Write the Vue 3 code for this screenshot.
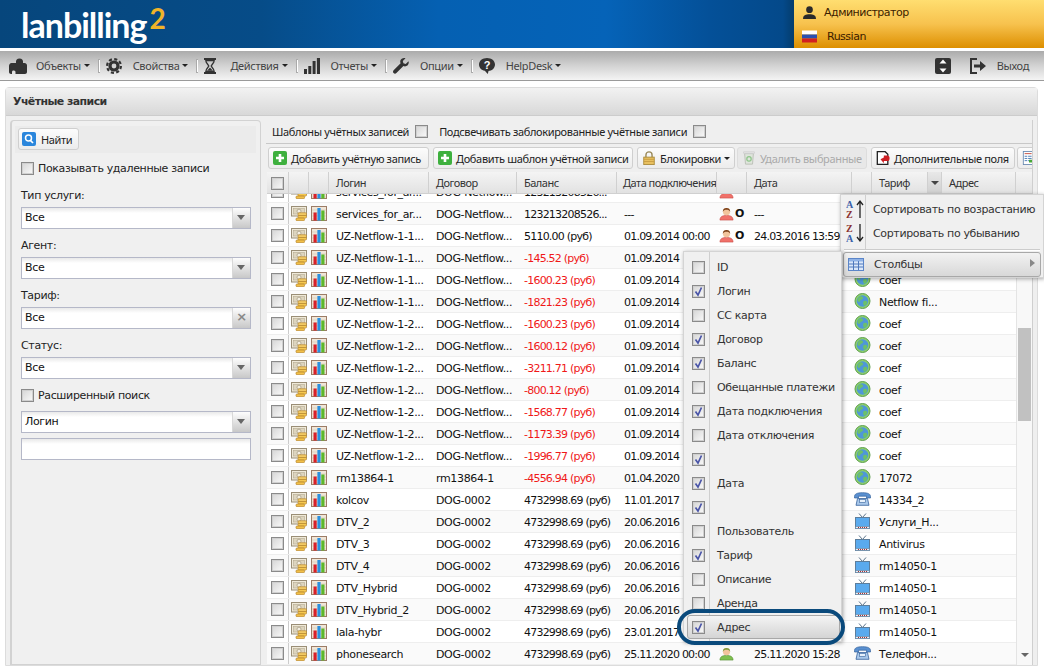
<script setup>
const U = 'UZ-Netflow-1-1...', V = 'UZ-Netflow-1-2...', D = 'DOG-Netflow...', G = 'DOG-0002'
const rows = [
  { l: 'services_for_ar...', c: D, b: '123213208526...', d1: '---', u: 'red', d2: '', t: '', a: '' },
  { l: 'services_for_ar...', c: D, b: '123213208526...', d1: '---', u: 'red', o: 1, d2: '---', t: '', a: '' },
  { l: U, c: D, b: '5110.00 (руб)', d1: '01.09.2014 00:00', u: 'red', o: 1, d2: '24.03.2016 13:59', t: '', a: '' },
  { l: U, c: D, b: '-145.52 (руб)', neg: 1, d1: '01.09.2014', u: 'red', d2: '', t: '', a: '' },
  { l: U, c: D, b: '-1600.23 (руб)', neg: 1, d1: '01.09.2014', t: 'globe', a: 'coef' },
  { l: U, c: D, b: '-1821.23 (руб)', neg: 1, d1: '01.09.2014', t: 'globe', a: 'Netflow fi...' },
  { l: V, c: D, b: '-1600.23 (руб)', neg: 1, d1: '01.09.2014', t: 'globe', a: 'coef' },
  { l: V, c: D, b: '-1600.12 (руб)', neg: 1, d1: '01.09.2014', t: 'globe', a: 'coef' },
  { l: V, c: D, b: '-3211.71 (руб)', neg: 1, d1: '01.09.2014', t: 'globe', a: 'coef' },
  { l: V, c: D, b: '-800.12 (руб)', neg: 1, d1: '01.09.2014', t: 'globe', a: 'coef' },
  { l: V, c: D, b: '-1568.77 (руб)', neg: 1, d1: '01.09.2014', t: 'globe', a: 'coef' },
  { l: V, c: D, b: '-1173.39 (руб)', neg: 1, d1: '01.09.2014', t: 'globe', a: 'coef' },
  { l: V, c: D, b: '-1996.77 (руб)', neg: 1, d1: '01.09.2014', t: 'globe', a: 'coef' },
  { l: 'rm13864-1', c: 'rm13864-1', b: '-4556.94 (руб)', neg: 1, d1: '01.04.2020', t: 'globe', a: '17072' },
  { l: 'kolcov', c: G, b: '4732998.69 (руб)', d1: '11.01.2017', t: 'phone', a: '14334_2' },
  { l: 'DTV_2', c: G, b: '4732998.69 (руб)', d1: '20.06.2016', t: 'tv', a: 'Услуги_Н...' },
  { l: 'DTV_3', c: G, b: '4732998.69 (руб)', d1: '20.06.2016', t: 'tv', a: 'Antivirus' },
  { l: 'DTV_4', c: G, b: '4732998.69 (руб)', d1: '20.06.2016', t: 'tv', a: 'rm14050-1' },
  { l: 'DTV_Hybrid', c: G, b: '4732998.69 (руб)', d1: '20.06.2016', t: 'tv', a: 'rm14050-1' },
  { l: 'DTV_Hybrid_2', c: G, b: '4732998.69 (руб)', d1: '20.06.2016', t: 'tv', a: 'rm14050-1' },
  { l: 'lala-hybr', c: G, b: '4732998.69 (руб)', d1: '23.01.2017', t: 'tv', a: 'rm14050-1' },
  { l: 'phonesearch', c: G, b: '4732998.69 (руб)', d1: '25.11.2020 00:00', u: 'green', d2: '25.11.2020 15:28', t: 'phone', a: 'Телефон...' },
]
const columns = [
  { n: 'ID' }, { n: 'Логин', on: 1 }, { n: 'CC карта' }, { n: 'Договор', on: 1 }, { n: 'Баланс', on: 1 },
  { n: 'Обещанные платежи' }, { n: 'Дата подключения', on: 1 }, { n: 'Дата отключения' }, { n: '', on: 1 },
  { n: 'Дата', on: 1 }, { n: '', on: 1 }, { n: 'Пользователь' }, { n: 'Тариф', on: 1 }, { n: 'Описание' },
  { n: 'Аренда' }, { n: 'Адрес', on: 1, hot: 1 },
]
const filters = [
  { label: 'Тип услуги:', v: 'Все' }, { label: 'Агент:', v: 'Все' },
  { label: 'Тариф:', v: 'Все', clear: 1 }, { label: 'Статус:', v: 'Все' },
]
const nav = [
  { i: 'puzzle', t: 'Объекты' }, { i: 'gear', t: 'Свойства' }, { i: 'glass', t: 'Действия' },
  { i: 'bars', t: 'Отчеты' }, { i: 'wrench', t: 'Опции' }, { i: 'help', t: 'HelpDesk' },
]
</script>

<template>
  <div class="page">
    <svg class="defs" aria-hidden="true">
      <defs>
        <symbol id="money" viewBox="0 0 16 15">
          <rect x="0.5" y="0.5" width="15" height="9.500" fill="#efe9d8" stroke="#9a8e76" />
          <rect x="2.5" y="2.5" width="11" height="5.500" fill="#ddd5bf" stroke="#b5aa90" stroke-width=".6" />
          <circle cx="8" cy="5.2" r="2" fill="#f4efe2" stroke="#968a72" stroke-width=".6" />
          <rect x="7" y="6.800" width="8.500" height="2.700" rx="1" fill="#f7d06a" stroke="#b5842e" stroke-width=".7" />
          <rect x="7" y="9.400" width="8.500" height="2.700" rx="1" fill="#f5c850" stroke="#b5842e" stroke-width=".7" />
          <rect x="5" y="12" width="8.500" height="2.700" rx="1" fill="#f2c048" stroke="#b5842e" stroke-width=".7" />
        </symbol>
        <symbol id="chart" viewBox="0 0 16 15">
          <rect x="0.5" y="0.5" width="15" height="14" fill="#f0e6d8" stroke="#9c7c66" />
          <path d="M1 4h14M1 7h14M1 10h14M1 13h14" stroke="#d8c8b8" stroke-width=".7" />
          <rect x="2.500" y="6.500" width="3.200" height="8" fill="#d8202a" />
          <rect x="6.400" y="2" width="3.200" height="12.500" fill="#2a8fe0" />
          <rect x="10.300" y="4.500" width="3.200" height="10" fill="#5cb82c" />
        </symbol>
        <symbol id="user-red" viewBox="0 0 16 14">
          <path d="M1 13.5c0-3.5 2.500-5 7-5s7 1.500 7 5z" fill="#f0716a" stroke="#c84a44" stroke-width=".6" />
          <circle cx="8" cy="4.5" r="3.800" fill="#f2c49c" />
          <path d="M4 4.500C4 1.500 6 .5 8 .5s4 1 4 4c-1-1.500-2-2-4-2s-3 .5-4 2z" fill="#7a3f18" />
        </symbol>
        <symbol id="user-green" viewBox="0 0 16 14">
          <path d="M1 13.500c0-3.500 2.500-5 7-5s7 1.500 7 5z" fill="#7fc04e" stroke="#4f8a2c" stroke-width=".6" />
          <circle cx="8" cy="4.500" r="3.800" fill="#f2c49c" />
          <path d="M4 4.500C4 1.500 6 .5 8 .5s4 1 4 4c-1-1.500-2-2-4-2s-3 .5-4 2z" fill="#7d9a3a" />
        </symbol>
        <symbol id="globe" viewBox="0 0 16 16">
          <circle cx="8" cy="8" r="7.500" fill="#8ed06a" />
          <circle cx="8" cy="8" r="5.800" fill="#4f97d8" />
          <path d="M5 3.500c2-.8 3.500 0 3.500 1.500S6 6.500 5.500 8 3.500 9 3 7.500 3.500 4.500 5 3.500zM9.500 8c1.500-.8 3.500 0 3.300 1.500s-2 3.500-3 3.200S8 9 9.500 8z" fill="#6cc06a" />
          <circle cx="8" cy="8" r="7.500" fill="none" stroke="#5f9f50" />
        </symbol>
        <symbol id="phone" viewBox="0 0 17 14">
          <path d="M.5 4.500C.5 2 3 .7 8.500.7s8 1.300 8 3.800V6h-4V4.200H4.500V6h-4z" fill="#5a90d0" stroke="#33619c" stroke-width=".7" />
          <path d="M3.500 6.500h10L15 13.300H2z" fill="#a9c8ea" stroke="#33619c" stroke-width=".8" />
          <rect x="5.500" y="7.500" width="6" height="3" fill="#e6f0fb" stroke="#33619c" stroke-width=".6" />
        </symbol>
        <symbol id="tv" viewBox="0 0 15 16">
          <path d="M4 .5L7.500 4.500 11 .5" fill="none" stroke="#5a7288" />
          <rect x="0.500" y="4.500" width="14" height="11" fill="#5aaaee" stroke="#5d7e9c" />
          <rect x="0.500" y="13.500" width="14" height="2" fill="#e8eef4" stroke="#5d7e9c" stroke-width=".6" />
          <path d="M3 14.500h9" stroke="#b03030" stroke-dasharray="1 1" />
        </symbol>
        <symbol id="puzzle" viewBox="0 0 18 16">
          <path d="M0 8c0-1.500 1-3 2.500-3H7V3.500C7 2 8 .5 10.500.5S14 2 14 3.500V5h1.500C17 5 18 6 18 7.500V14c0 1-1 2-2 2H6.500v-2c0-1-1-1.500-2-1.500s-1.500.7-1.500 1.500v2H2c-1 0-2-1-2-2z" fill="#333" />
        </symbol>
        <symbol id="gear" viewBox="0 0 16 16">
          <circle cx="8" cy="8" r="4" fill="none" stroke="#333" stroke-width="3.200" />
          <circle cx="8" cy="8" r="6.900" fill="none" stroke="#333" stroke-width="2.200" stroke-dasharray="3.100 2.320" />
        </symbol>
        <symbol id="glass" viewBox="0 0 12 16">
          <path d="M0 0h12v2H0zM0 14h12v2H0z" fill="#333" />
          <path d="M1.800 2.500h8.400c0 2.500-2.500 4-3 5.500.5 1.500 3 3 3 5.500H1.800c0-2.500 2.500-4 3-5.500-.5-1.500-3-3-3-5.500z" fill="none" stroke="#333" stroke-width="1.300" />
          <path d="M3 12.800h6L6 9.500z" fill="#333" />
        </symbol>
        <symbol id="bars" viewBox="0 0 16 16">
          <path d="M0 11h3v5H0zM4.300 8h3v8h-3zM8.600 3h3v13h-3zM12.900 0H16v16h-3.100z" fill="#333" />
        </symbol>
        <symbol id="wrench" viewBox="0 0 16 16">
          <path d="M15.500 3.300l-2.800 2.600-2.300-.6-.6-2.300L12.500.3C10.500-.4 8 .5 7.400 2.500c-.3 1-.2 2 .2 2.800L.6 12.300c-.8.8-.8 2 0 2.800s2 .8 2.800 0l7-7c2.500 1 5-.5 5.300-3 .1-.6 0-1.200-.2-1.800z" fill="#333" />
        </symbol>
        <symbol id="help" viewBox="0 0 16 16">
          <path d="M8 0c4.500 0 8 2.800 8 6.500S12.500 13 9.500 13l-.7 3-3-3.300C2.500 12.200 0 9.800 0 6.500 0 2.800 3.500 0 8 0z" fill="#333" />
          <text x="8" y="11" text-anchor="middle" font-family="Liberation Sans, sans-serif" font-weight="700" font-size="11" fill="#fff">?</text>
        </symbol>
        <symbol id="check" viewBox="0 0 13 13">
          <path d="M3.500 6.500L6 10l3.500-7.500" fill="none" stroke="#4a55a8" stroke-width="1.700" />
        </symbol>
      </defs>
    </svg>

    <header class="top">
      <div class="logo"><span>lanbilling</span><sup>2</sup></div>
      <div class="account">
        <div class="acct-row">
          <svg class="acct-icon" viewBox="0 0 16 14"><circle cx="8" cy="4" r="3.600" fill="#2a2a2a" /><path d="M1 14c0-4 3-5 7-5s7 1 7 5z" fill="#2a2a2a" /></svg>
          <span>Администратор</span>
        </div>
        <div class="acct-row lang">
          <svg class="acct-icon" viewBox="0 0 15 12"><rect width="15" height="4" fill="#fff" /><rect y="4" width="15" height="4" fill="#2a50b0" /><rect y="8" width="15" height="4" fill="#d22020" /></svg>
          <span>Russian</span>
        </div>
      </div>
    </header>

    <nav class="navbar">
      <template v-for="(n, i) in nav" :key="n.t">
        <span v-if="i" class="nav-sep"></span>
        <div class="nav-item">
          <svg class="nav-icon" :class="n.i"><use :href="'#' + n.i" /></svg>
          <span>{{ n.t }}</span>
          <i class="caret"></i>
        </div>
      </template>
      <div class="nav-right">
        <svg class="nav-icon fs" viewBox="0 0 16 16"><rect width="16" height="16" rx="2" fill="#333" /><path d="M8 1.500l3.500 4h-7zM8 14.500l-3.500-4h7z" fill="#fff" /></svg>
        <svg class="nav-icon ex" viewBox="0 0 16 16"><path d="M7 1H1v14h6" fill="none" stroke="#333" stroke-width="2" /><path d="M4 6.500h6V3l6 5-6 5V9.500H4z" fill="#333" /></svg>
        <span>Выход</span>
      </div>
    </nav>

    <section class="panel">
      <h1 class="panel-title">Учётные записи</h1>
      <div class="panel-body">
        <aside class="filter">
          <div class="filter-bar">
            <button class="btn find">
              <svg class="find-i" viewBox="0 0 14 14"><rect width="14" height="14" rx="2" fill="#2a86dc" /><circle cx="6.500" cy="6" r="3" fill="none" stroke="#fff" stroke-width="1.500" /><path d="M8.500 8.500l2.500 2.500" stroke="#fff" stroke-width="1.700" /></svg>
              Найти
            </button>
          </div>
          <label class="chk first"><span class="cb"></span>Показывать удаленные записи</label>
          <div v-for="f in filters" :key="f.label" class="field">
            <div class="f-label">{{ f.label }}</div>
            <div class="combo">
              <span class="combo-v">{{ f.v }}</span>
              <span class="trig" :class="{ x: f.clear }">{{ f.clear ? '×' : '' }}</span>
            </div>
          </div>
          <label class="chk adv"><span class="cb"></span>Расширенный поиск</label>
          <div class="combo"><span class="combo-v login">Логин</span><span class="trig"></span></div>
          <div class="combo plain"></div>
        </aside>

        <main class="right">
          <div class="bar1">
            <span>Шаблоны учётных записей</span><span class="cb m1"></span>
            <span class="hl">Подсвечивать заблокированные учётные записи</span><span class="cb m1"></span>
          </div>
          <div class="bar2">
            <button class="btn w1"><svg class="bi" viewBox="0 0 14 14"><rect width="14" height="14" rx="2" fill="#3eb03e" /><path d="M7 3v8M3 7h8" stroke="#fff" stroke-width="2.600" /></svg>Добавить учётную запись</button>
            <button class="btn w2"><svg class="bi" viewBox="0 0 14 14"><rect width="14" height="14" rx="2" fill="#3eb03e" /><path d="M7 3v8M3 7h8" stroke="#fff" stroke-width="2.600" /></svg>Добавить шаблон учётной записи</button>
            <button class="btn w3"><svg class="bi" viewBox="0 0 14 16"><path d="M3.500 8V4.500a3.500 3.500 0 017 0V8" fill="none" stroke="#9a8a5a" stroke-width="1.600" /><rect x="1" y="7" width="12" height="8.500" fill="#e8c060" stroke="#a98838" /><path d="M1 9.500h12M1 12h12" stroke="#c89c40" /></svg>Блокировки<i class="caret"></i></button>
            <button class="btn w4 off"><svg class="bi" viewBox="0 0 14 16"><path d="M2 3h10l-1 12H3z" fill="#dfe5dc" stroke="#b8bdb4" /><rect x="1" y="1" width="12" height="2" fill="#e4e4e4" stroke="#c4c4c4" stroke-width=".6" /><circle cx="7" cy="9" r="2.500" fill="none" stroke="#8ec58a" stroke-width="1.400" /></svg>Удалить выбранные</button>
            <button class="btn w5"><svg class="bi" viewBox="0 0 16 16"><path d="M1.500.8h9l3 3v11.500h-12z" fill="#fff" stroke="#222" stroke-width="1.500" /><path d="M7 5h4.500a3 3 0 010 6.500H7V14L2.500 9.500 7 7.500z" fill="#cc1f24" transform="translate(3 0) scale(.85 1)" /></svg>Дополнительные поля</button>
            <button class="btn w6"><svg class="bi" viewBox="0 0 14 16"><rect x=".5" y=".5" width="11" height="15" fill="#fff" stroke="#6a8ab0" /><path d="M2 3h8" stroke="#c04030" /><path d="M2 6h3M6 6h4M2 8.500h3M6 8.500h4M2 11h3M6 11h4" stroke="#3a70b0" /><path d="M7 10h4V7.500l3 4-3 4V13H7z" fill="#48a838" /></svg></button>
          </div>

          <div class="grid-wrap">
            <div class="grid-head cols">
              <div class="hc ctr"><span class="cb"></span></div>
              <div class="hc"></div>
              <div class="hc"></div>
              <div class="hc">Логин</div>
              <div class="hc">Договор</div>
              <div class="hc">Баланс</div>
              <div class="hc clip">Дата подключения</div>
              <div class="hc"></div>
              <div class="hc">Дата</div>
              <div class="hc"></div>
              <div class="hc tar"><span>Тариф</span><span class="h-trig"><i class="caret"></i></span></div>
              <div class="hc">Адрес</div>
            </div>
            <div class="grid-scroll">
              <div class="rows">
                <div v-for="(r, i) in rows" :key="i" class="row cols" :class="{ odd: i % 2 === 1 }">
                  <div class="c ctr"><span class="cb"></span></div>
                  <div class="c ic"><svg class="s-money"><use href="#money" /></svg></div>
                  <div class="c ic"><svg class="s-chart"><use href="#chart" /></svg></div>
                  <div class="c t">{{ r.l }}</div>
                  <div class="c t">{{ r.c }}</div>
                  <div class="c t num" :class="{ neg: r.neg }">{{ r.b }}</div>
                  <div class="c t num">{{ r.d1 }}</div>
                  <div class="c uc">
                    <svg v-if="r.u" class="s-user"><use :href="'#user-' + r.u" /></svg>
                    <b v-if="r.o">O</b>
                  </div>
                  <div class="c t num">{{ r.d2 }}</div>
                  <div class="c ic type"><svg v-if="r.t" class="s-type"><use :href="'#' + r.t" /></svg></div>
                  <div class="c t">{{ r.a }}</div>
                  <div class="c t"></div>
                </div>
              </div>
              <div class="scrollbar">
                <span class="arr up"></span>
                <span class="thumb"></span>
                <span class="arr down"></span>
              </div>
            </div>
          </div>
        </main>
      </div>
    </section>

    <div class="menu sort">
      <div class="m-item">
        <span class="m-ic"><svg class="az" viewBox="0 0 18 20"><text x="0" y="9" class="ta">A</text><text x="0" y="19" class="tz">Z</text><path d="M14 19V3M11 6l3-4 3 4" fill="none" stroke="#222" stroke-width="1.300" /></svg></span>
        <span>Сортировать по возрастанию</span>
      </div>
      <div class="m-item">
        <span class="m-ic"><svg class="az" viewBox="0 0 18 20"><text x="0" y="9" class="tz">Z</text><text x="0" y="19" class="ta">A</text><path d="M14 1v16M11 14l3 4 3-4" fill="none" stroke="#222" stroke-width="1.300" /></svg></span>
        <span>Сортировать по убыванию</span>
      </div>
      <div class="m-div"></div>
      <div class="m-item hot">
        <span class="m-ic"><svg class="colsi" viewBox="0 0 16 13"><rect x=".5" y=".5" width="15" height="12" fill="#dbe8fa" stroke="#5b85c8" /><rect x="1" y="1" width="14" height="2.500" fill="#8fb2e6" /><path d="M5.500 3v9M10.500 3v9M1 6h14M1 9h14" stroke="#4f78bc" /></svg></span>
        <span>Столбцы</span>
        <i class="sub"></i>
      </div>
    </div>

    <div class="menu colmenu">
      <div v-for="(c, i) in columns" :key="i" class="cm-item" :class="{ hot: c.hot }">
        <span class="cm-ic"><span class="cb"><svg v-if="c.on" class="ck"><use href="#check" /></svg></span></span>
        <span>{{ c.n }}</span>
      </div>
    </div>
    <div class="ring"></div>
  </div>
</template>

<style>
html, body { margin: 0; background: #fff; overflow: hidden; }
</style>

<style scoped>
.page {
  position: relative;
  width: 1044px;
  height: 666px;
  overflow: hidden;
  display: flex;
  flex-direction: column;
  background: #fff;
  font-family: "DejaVu Sans", sans-serif;
  font-size: 11px;
  letter-spacing: -.35px;
  color: #222;
}
.defs { position: absolute; width: 0; height: 0; }
button { font: inherit; color: inherit; }

/* narrower text, as in the toolbars and the grid head */
.navbar, .bar1, .btn, .grid-head {
  font-family: "Noto Sans", sans-serif;
  font-size: 11px;
  letter-spacing: -.34px;
}
.grid-head { letter-spacing: -.5px; }

/* header */
.top {
  height: 48px;
  flex: none;
  display: flex;
  justify-content: space-between;
  background: linear-gradient(90deg, #06467c 0%, #064c88 25%, #0560b2 42%, #0563b8 58%, #045098 68%, #04498a 75%, #043d6e 76%);
}
.logo {
  padding: 0 0 0 21px;
  color: #fff;
  font-family: Lato, sans-serif;
  font-weight: 700;
  font-size: 34px;
  line-height: 50px;
  letter-spacing: -1px;
  white-space: nowrap;
}
.logo sup {
  color: #f0b429;
  font-size: 28px;
  line-height: 0;
  vertical-align: 9px;
  margin-left: 3px;
}
.account {
  width: 250px;
  padding: 0 0 0 8px;
  box-sizing: border-box;
  background: linear-gradient(180deg, #ffde70 0%, #f7c24e 50%, #dd8f00 100%);
  color: #3c1c00;
  letter-spacing: -.5px;
}
.acct-row { height: 24px; display: flex; align-items: center; gap: 7px; }
.acct-row.lang { gap: 10px; }
.acct-icon { width: 15px; height: 13px; flex: none; }

/* nav */
.navbar {
  margin-top: 3px;
  height: 30px;
  flex: none;
  box-sizing: border-box;
  display: flex;
  align-items: center;
  padding-left: 9px;
  background: linear-gradient(180deg, #ababab 0%, #d2d2d2 50%, #f4f4f4 100%);
  border-bottom: 1px solid #9a9a9a;
  color: #444;
}
.nav-item { display: flex; align-items: center; }
.nav-icon { width: 16px; height: 16px; flex: none; margin-right: 11px; }
.nav-icon.puzzle { width: 18px; margin-right: 9px; }
.nav-icon.glass { width: 12px; margin-right: 14px; }
.caret {
  display: inline-block;
  width: 0; height: 0;
  margin-left: 3px;
  border: 3px solid transparent;
  border-top: 3px solid #222;
  border-bottom: 0;
  vertical-align: middle;
}
.nav-sep {
  width: 2px; height: 14px;
  margin: 0 6px 0 8px;
  border: 1px solid #aaa;
  border-right: 0;
  background: #fff;
  box-sizing: border-box;
}
.nav-right { margin-left: auto; display: flex; align-items: center; padding-right: 15px; }
.nav-right .fs { margin-right: 19px; }
.nav-right .ex { margin-right: 11px; }

/* panel */
.panel {
  margin: 6px 6px 0 5px;
  flex: 1;
  min-height: 0;
  border: 1px solid #dcdcdc;
  border-radius: 4px 4px 0 0;
  display: flex;
  flex-direction: column;
  background: #efefef;
}
.panel-title {
  margin: 0;
  height: 27px;
  flex: none;
  padding-left: 7px;
  line-height: 27px;
  font-size: 11px;
  font-weight: 700;
  letter-spacing: -.6px;
  color: #333;
  background: linear-gradient(180deg, #f2f2f2, #d8d8d8);
  border-bottom: 1px solid #ccc;
}
.panel-body { flex: 1; min-height: 0; display: flex; padding: 4px 0 0 4px; }

/* filter */
.filter {
  width: 251px;
  flex: none;
  box-sizing: border-box;
  padding: 5px 9px 0 9px;
  border: 1px solid #d2d2d2;
  border-left-width: 2px;
  border-radius: 4px 4px 0 0;
  background: #f0f0f0;
}
.filter-bar { margin: 0 -5px 0 -6px; padding: 2px 3px; height: 27px; box-sizing: border-box; background: #ebebeb; }
.btn {
  display: inline-flex;
  align-items: center;
  height: 22px;
  box-sizing: border-box;
  padding: 0 3px;
  border: 1px solid #cfcfcf;
  border-radius: 3px;
  background: linear-gradient(180deg, #fcfcfc, #ececec);
  white-space: nowrap;
}
.find { width: 61px; gap: 5px; }
.find-i { width: 14px; height: 14px; }
.chk { display: flex; align-items: center; gap: 4px; }
.chk.first { margin-top: 8px; height: 14px; }
.cb {
  display: inline-block;
  position: relative;
  width: 13px;
  height: 13px;
  flex: none;
  box-sizing: border-box;
  border: 1px solid #8a8a8a;
  background: linear-gradient(135deg, #d5d5d5, #fafafa);
  box-shadow: inset 0 0 0 1px #d0d0d0;
}
.ck { position: absolute; left: -1px; top: -1px; width: 13px; height: 13px; }
.field { margin-top: 9px; }
.chk.first + .field { margin-top: 13px; }
.f-label { height: 15px; line-height: 15px; margin-bottom: 4px; }
.combo {
  height: 22px;
  box-sizing: border-box;
  display: flex;
  border: 1px solid #b5b8c8;
  background: linear-gradient(180deg, #e9e9e9 0, #fff 5px);
  width: 230px;
}
.combo-v { flex: 1; padding-left: 3px; line-height: 20px; color: #111; }
.trig {
  width: 17px;
  position: relative;
  background: linear-gradient(180deg, #fdfdfd, #c8c8c8);
  border-left: 1px solid #d8d8d8;
  text-align: center;
  color: #888;
  line-height: 18px;
  font-weight: 700;
  font-size: 13px;
}
.trig:not(.x)::after {
  content: "";
  position: absolute;
  left: 4px;
  top: 7px;
  width: 0; height: 0;
  border: 4px solid transparent;
  border-top: 5px solid #666;
  border-bottom: 0;
}
.chk.adv { margin-top: 9px; height: 15px; margin-bottom: 8px; }
.combo.plain { margin-top: 5px; }

/* right */
.right { flex: 1; min-width: 0; display: flex; flex-direction: column; margin-left: 5px; margin-right: 4px; border-right: 1px solid #cfcfcf; }
.bar1 {
  height: 24px;
  flex: none;
  box-sizing: border-box;
  display: flex;
  align-items: center;
  padding-left: 6px;
  border-bottom: 1px solid #c8c8c8;
}
.m1 { margin-left: 6px; }
.hl { margin-left: 11px; }
.bar2 {
  height: 28px;
  flex: none;
  box-sizing: border-box;
  display: flex;
  align-items: center;
  overflow: hidden;
  padding-left: 2px;
  gap: 4px;
}
.bi { width: 14px; height: 14px; flex: none; margin-right: 4px; margin-left: 1px; }
.btn.w1 { width: 161px; flex: none; }
.btn.w2 { width: 200px; flex: none; }
.btn.w3 { width: 98px; flex: none; margin-right: -2px; }
.btn.w4 { width: 130px; flex: none; color: #aaa; background: #e8e8e8; border-color: #ddd; }
.btn.w5 { width: 144px; flex: none; }
.btn.w6 { width: 30px; flex: none; margin-left: -2px; }

.grid-wrap { flex: 1; min-height: 0; display: flex; flex-direction: column; margin-left: 1px; background: #fff; }
.cols { display: grid; grid-template-columns: 22px 20px 20px 100px 88px 100px 100px 30px 105px 20px 70px 74px; }
.grid-head {
  height: 22px;
  flex: none;
  background: linear-gradient(180deg, #f4f4f4, #e2e2e2);
  border-bottom: 1px solid #d0d0d0;
  box-sizing: border-box;
  line-height: 22px;
  color: #333;
}
.hc { border-right: 1px solid #d0d0d0; padding-left: 7px; min-width: 0; white-space: nowrap; box-sizing: border-box; }
.hc.clip { overflow: hidden; padding-left: 6px; }
.hc.ctr, .c.ctr { padding: 0; display: flex; align-items: center; justify-content: center; }
.hc.tar { display: flex; justify-content: space-between; padding-right: 0; }
.h-trig { width: 13px; display: flex; align-items: center; justify-content: center; border-left: 1px solid #d0d0d0; background: linear-gradient(180deg, #e8e8e8, #cfcfcf); }
.h-trig .caret { margin: 0; border-width: 4px; border-bottom: 0; border-top-color: #444; }
.grid-scroll { flex: 1; min-height: 0; display: flex; overflow: hidden; }
.rows { width: 749px; flex: none; margin-top: -13px; }
.row { height: 22px; box-sizing: border-box; border-bottom: 1px solid #eee; background: #fff; }
.row.odd { background: #fafafa; }
.c { min-width: 0; overflow: hidden; }
.c.ctr { border-right: 1px solid #ccc; box-sizing: border-box; }
.c.t { padding-left: 7px; line-height: 23px; white-space: nowrap; color: #111; }
.c.num { letter-spacing: -.78px; }
.c.neg { color: #f01818; }
.c.ic { display: flex; align-items: flex-start; justify-content: center; padding-top: 3px; }
.c.ic.type { padding-top: 2px; }
.s-money, .s-chart { width: 16px; height: 15px; }
.s-type { width: 17px; height: 16px; }
.c.uc { display: flex; align-items: center; padding-left: 2px; }
.s-user { width: 15px; height: 14px; flex: none; }
.c.uc b { font-size: 11px; margin-left: 1px; color: #111; }
.scrollbar { width: 17px; flex: none; position: relative; background: #f8f8f8; border-left: 1px solid #e4e4e4; box-sizing: border-box; }
.thumb { position: absolute; left: 1px; right: 2px; top: 134px; height: 93px; background: #c1c1c1; }
.arr { position: absolute; left: 4px; width: 0; height: 0; border: 4px solid transparent; }
.arr.up { top: 4px; border-top: 0; border-bottom: 4px solid #666; }
.arr.down { bottom: 8px; border-bottom: 0; border-top: 4px solid #666; }

/* menus */
.menu {
  position: absolute;
  box-sizing: border-box;
  background: #f0f0f0;
  border: 1px solid #d4d4d4;
  box-shadow: 1px 1px 4px rgba(0, 0, 0, .35);
  color: #333;
  white-space: nowrap;
}
.sort {
  left: 840px;
  top: 194px;
  width: 204px;
  height: 84px;
  padding: 2px;
  background: linear-gradient(90deg, #f0f0f0 24px, #cfcfcf 24px, #cfcfcf 25px, #f0f0f0 25px);
}
.m-item { height: 24px; display: flex; align-items: center; position: relative; }
.m-ic { width: 24px; flex: none; margin-right: 6px; display: flex; justify-content: center; }
.az { width: 18px; height: 20px; }
.ta { font: 700 10px "Liberation Serif", serif; fill: #3a5fa8; }
.tz { font: 700 10px "Liberation Serif", serif; fill: #8a3030; }
.colsi { width: 16px; height: 13px; }
.m-div { height: 1px; background: #ccc; margin: 4px 1px 1px 1px; border-bottom: 1px solid #fff; }
.m-item.hot {
  height: 23px;
  border: 1px solid #a8a8a8;
  border-radius: 3px;
  background: linear-gradient(180deg, #f2f2f2, #d8d8d8);
}
.sub { position: absolute; right: 5px; top: 6px; width: 0; height: 0; border: 4px solid transparent; border-left: 5px solid #888; border-right: 0; }
.colmenu {
  left: 683px;
  top: 251px;
  width: 159px;
  height: 391px;
  padding-top: 3px;
  background: linear-gradient(90deg, #f0f0f0 25px, #cfcfcf 25px, #cfcfcf 26px, #f0f0f0 26px);
}
.cm-item { height: 24px; display: flex; align-items: center; box-sizing: border-box; margin-left: 3px; margin-right: 1px; }
.cm-ic { width: 30px; flex: none; padding-left: 5px; box-sizing: border-box; display: flex; }
.cm-item.hot {
  border: 1px solid #a8a8a8;
  border-radius: 3px;
  background: linear-gradient(180deg, #f4f4f4, #d4d4d4);
}
.cm-item.hot .cm-ic { padding-left: 4px; width: 29px; }
.ring {
  position: absolute;
  left: 677px;
  top: 609px;
  width: 168px;
  height: 36px;
  box-sizing: border-box;
  border: 4px solid #0a4a7c;
  border-radius: 18px;
}
</style>
